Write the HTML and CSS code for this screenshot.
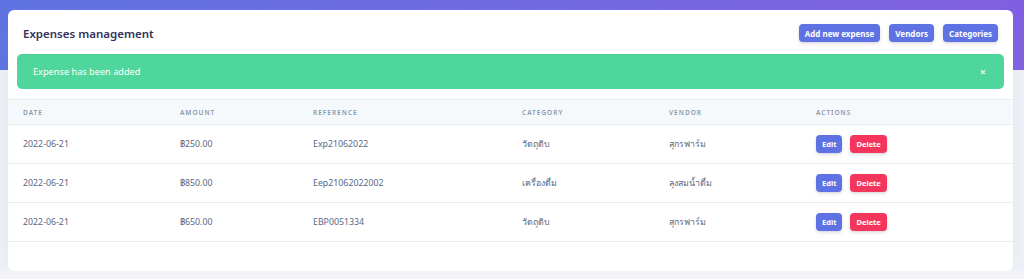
FILE: index.html
```html
<!DOCTYPE html>
<html lang="th">
<head>
  <meta charset="UTF-8" />
  <meta name="viewport" content="width=device-width, initial-scale=1.0" />
  <title>Expenses management</title>
  <link rel="stylesheet" href="styles.css">
</head>
<body>
  <div class="card">
    <div class="card-header">
      <h3>Expenses management</h3>
      <div class="header-actions">
        <button class="btn btn-primary">Add new expense</button>
        <button class="btn btn-primary">Vendors</button>
        <button class="btn btn-primary">Categories</button>
      </div>
    </div>

    <div class="alert">
      <span>Expense has been added</span>
      <span class="alert-close">×</span>
    </div>

    <table>
      <thead>
        <tr>
          <th class="col-date">Date</th>
          <th class="col-amount">Amount</th>
          <th class="col-ref">Reference</th>
          <th class="col-cat">Category</th>
          <th class="col-vendor">Vendor</th>
          <th>Actions</th>
        </tr>
      </thead>
      <tbody>
        <tr>
          <td>2022-06-21</td>
          <td>฿250.00</td>
          <td>Exp21062022</td>
          <td>วัตถุดิบ</td>
          <td>สุกรฟาร์ม</td>
          <td><button class="btn btn-sm btn-primary">Edit</button><button class="btn btn-sm btn-danger">Delete</button></td>
        </tr>
        <tr>
          <td>2022-06-21</td>
          <td>฿850.00</td>
          <td>Eep21062022002</td>
          <td>เครื่องดื่ม</td>
          <td>ลุงสมน้ำดื่ม</td>
          <td><button class="btn btn-sm btn-primary">Edit</button><button class="btn btn-sm btn-danger">Delete</button></td>
        </tr>
        <tr>
          <td>2022-06-21</td>
          <td>฿650.00</td>
          <td>EBP0051334</td>
          <td>วัตถุดิบ</td>
          <td>สุกรฟาร์ม</td>
          <td><button class="btn btn-sm btn-primary">Edit</button><button class="btn btn-sm btn-danger">Delete</button></td>
        </tr>
      </tbody>
    </table>
  </div>
</body>
</html>
```

FILE: styles.css
```css
body {
  margin: 0;
  padding: 10px 11px 0 8px;
  font-family: 'Noto Sans', 'Open Sans', sans-serif;
  color: #525f7f;
  background: linear-gradient(87deg, #5e72e4 0, #825ee4 100%) top / 100% 70px no-repeat, #f1f3f9;
}

.card {
  background: #fff;
  border-radius: 6px;
  box-shadow: 0 0 2rem 0 rgba(136, 152, 170, 0.15);
  padding-bottom: 29px;
}

.card-header {
  display: flex;
  justify-content: space-between;
  align-items: center;
  padding: 14px 15px 12px 15px;
}

.card-header h3 {
  margin: 0;
  font-size: 11.5px;
  font-weight: 600;
  color: #32325d;
}

.header-actions {
  display: flex;
  gap: 9px;
}

.btn {
  border: none;
  border-radius: 4px;
  color: #fff;
  font-family: inherit;
  font-weight: 700;
  font-size: 8px;
  height: 18px;
  padding: 0 6px;
  box-shadow: 0 2px 4px rgba(50, 50, 93, 0.11), 0 1px 2px rgba(0, 0, 0, 0.08);
  cursor: pointer;
}

.btn-primary {
  background: #5e72e4;
}

.btn-danger {
  background: #f5365c;
}

.btn-sm {
  font-size: 7.5px;
  padding: 0 6px;
  margin-right: 8px;
}

.alert {
  display: flex;
  justify-content: space-between;
  align-items: center;
  margin: 0 9px 10px 9px;
  height: 35px;
  padding: 0 18px 0 16px;
  background: #4fd69c;
  border-radius: 5px;
  color: #fff;
  font-size: 9.2px;
}

.alert-close {
  font-size: 11px;
  font-weight: 700;
  opacity: 0.8;
}

table {
  width: 100%;
  border-collapse: collapse;
}

th, td {
  text-align: left;
  padding: 0 0 0 15px;
  border-top: 1px solid #e9ecef;
}

th {
  height: 24px;
  background: #f6f9fc;
  color: #8898aa;
  font-size: 6.5px;
  font-weight: 600;
  text-transform: uppercase;
  letter-spacing: 1px;
}

td {
  height: 38px;
  font-size: 8.8px;
  color: #5a6785;
  border-bottom: 1px solid #e9ecef;
}

.col-date { width: 142px; }
.col-amount { width: 118px; }
.col-ref { width: 194px; }
.col-cat { width: 132px; }
.col-vendor { width: 132px; }
```
